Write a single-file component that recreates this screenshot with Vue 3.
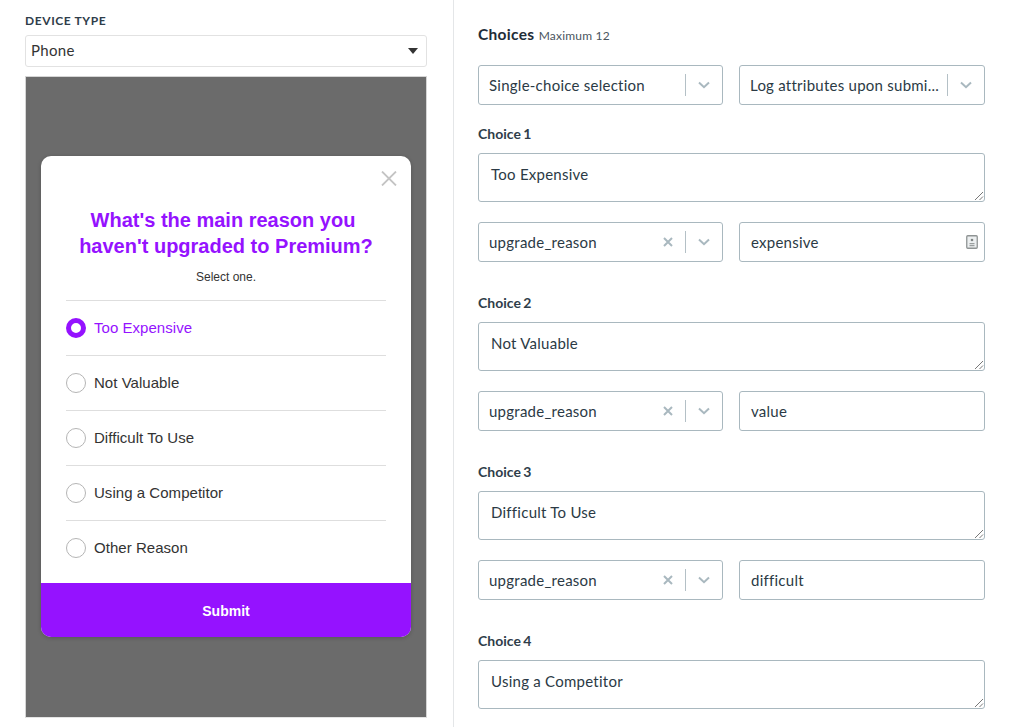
<script setup>
const options = [
  { label: "Too Expensive", selected: true },
  { label: "Not Valuable" },
  { label: "Difficult To Use" },
  { label: "Using a Competitor" },
  { label: "Other Reason" },
];

const choices = [
  { n: 1, text: "Too Expensive", value: "expensive", icon: true },
  { n: 2, text: "Not Valuable", value: "value" },
  { n: 3, text: "Difficult To Use", value: "difficult" },
];
</script>

<template>
  <div class="page">
    <section class="left">
      <div class="device-label">DEVICE TYPE</div>
      <div class="device-select">
        <span>Phone</span>
        <i class="caret"></i>
      </div>
      <div class="preview">
        <div class="modal">
          <div class="modal-close">
            <svg width="16" height="15" viewBox="0 0 16 15">
              <path d="M1 0.5L15 14.5M15 0.5L1 14.5" stroke="#c4c4c4" stroke-width="1.8" fill="none" />
            </svg>
          </div>
          <h2><span class="first-line">What's the main reason you</span><br />haven't upgraded to Premium?</h2>
          <p class="hint">Select one.</p>
          <ul>
            <li v-for="o in options" :key="o.label" :class="{ on: o.selected }">
              <span class="radio"></span>
              <span class="opt">{{ o.label }}</span>
            </li>
          </ul>
          <div class="submit">Submit</div>
        </div>
      </div>
    </section>

    <section class="right">
      <div class="heading"><b>Choices</b> <small>Maximum 12</small></div>
      <div class="row top-row">
        <div class="field pick">
          <span class="val">Single-choice selection</span>
          <span class="sep"></span>
          <svg class="chev" width="12" height="8" viewBox="0 0 12 8"><path d="M1 1.5L6 6.2L11 1.5" /></svg>
        </div>
        <div class="field pick">
          <span class="val">Log attributes upon submi...</span>
          <span class="sep"></span>
          <svg class="chev" width="12" height="8" viewBox="0 0 12 8"><path d="M1 1.5L6 6.2L11 1.5" /></svg>
        </div>
      </div>

      <div v-for="c in choices" :key="c.n" class="choice">
        <div class="choice-label">Choice {{ c.n }}</div>
        <div class="area">
          {{ c.text }}
          <svg class="grip" width="10" height="10" viewBox="0 0 10 10">
            <path d="M1 9L9 1M5.5 9L9 5.5" stroke="#555" stroke-width="0.8" fill="none" />
          </svg>
        </div>
        <div class="row">
          <div class="field pick">
            <span class="val">upgrade_reason</span>
            <svg class="clear" width="10" height="10" viewBox="0 0 10 10">
              <path d="M1 1L9 9M9 1L1 9" />
            </svg>
            <span class="sep"></span>
            <svg class="chev" width="12" height="8" viewBox="0 0 12 8"><path d="M1 1.5L6 6.2L11 1.5" /></svg>
          </div>
          <div class="field text">
            <span class="val">{{ c.value }}</span>
            <svg v-if="c.icon" class="contact" width="12" height="14" viewBox="0 0 12 14">
              <rect x="0.75" y="0.75" width="10.5" height="12.5" rx="1" fill="#eceff0" stroke="#8f9494" stroke-width="1.3" />
              <circle cx="6" cy="5" r="1.3" fill="#7f8484" />
              <path d="M3.5 8.6h5M3.5 10.6h5" stroke="#9a9f9f" stroke-width="1.2" />
            </svg>
          </div>
        </div>
      </div>

      <div class="choice">
        <div class="choice-label">Choice 4</div>
        <div class="area">
          Using a Competitor
          <svg class="grip" width="10" height="10" viewBox="0 0 10 10">
            <path d="M1 9L9 1M5.5 9L9 5.5" stroke="#555" stroke-width="0.8" fill="none" />
          </svg>
        </div>
      </div>
    </section>
  </div>
</template>

<style scoped>
.page {
  display: flex;
  height: 727px;
  overflow: hidden;
  background: #fff;
  font-family: Lato, "Open Sans", sans-serif;
  color: #2b3a45;
}
.left {
  box-sizing: border-box;
  width: 454px;
  flex: none;
  padding: 14px 26px 0 25px;
  border-right: 1px solid #e4e6e8;
}
.device-label {
  font-size: 12px;
  line-height: 14px;
  font-weight: 700;
  letter-spacing: 0.6px;
  color: #2f3d4a;
}
.device-select {
  box-sizing: border-box;
  height: 32px;
  margin-top: 7px;
  padding: 0 8px 2px 5px;
  display: flex;
  align-items: center;
  justify-content: space-between;
  border: 1px solid #e2e2e2;
  border-radius: 3px;
  font-size: 15px;
  letter-spacing: 0.3px;
  color: #333;
}
.caret {
  width: 0;
  height: 0;
  margin-top: 2px;
  border-left: 5.5px solid transparent;
  border-right: 5.5px solid transparent;
  border-top: 6px solid #333;
}
.preview {
  box-sizing: border-box;
  height: 642px;
  margin-top: 9px;
  padding: 79px 15px 0;
  background: #6b6b6b;
  border: 1px solid #d5d5d5;
  border-bottom-color: #e4e4e4;
}
.modal {
  height: 481px;
  background: #fff;
  border-radius: 10px;
  overflow: hidden;
  display: flex;
  flex-direction: column;
  font-family: "Liberation Sans", Arial, sans-serif;
  color: #333;
  box-shadow: 0 1px 4px rgba(0, 0, 0, 0.2);
}
.modal-close {
  height: 15px;
  padding: 15px 14px 0 0;
  display: flex;
  justify-content: flex-end;
}
h2 {
  margin: 21px 0 0;
  font-size: 20px;
  line-height: 26px;
  font-weight: 700;
  text-align: center;
  color: #9512ff;
}
.first-line {
  margin-right: 6px;
}
.hint {
  margin: 11px 0 0;
  font-size: 12px;
  line-height: 14px;
  text-align: center;
}
ul {
  list-style: none;
  margin: 16px 25px 0;
  padding: 0;
  flex: 1;
}
li {
  box-sizing: border-box;
  height: 55px;
  display: flex;
  align-items: center;
  gap: 8px;
  border-top: 1px solid #dedede;
  font-size: 15px;
  letter-spacing: 0.04px;
  color: #333;
}
li.on {
  color: #9512ff;
}
.opt {
  margin-top: -2px;
}
.radio {
  box-sizing: border-box;
  width: 20px;
  height: 20px;
  border: 1px solid #b5b5b5;
  border-radius: 50%;
}
li.on .radio {
  border: 5px solid #9512ff;
}
.submit {
  box-sizing: border-box;
  height: 54px;
  padding-top: 2px;
  display: flex;
  align-items: center;
  justify-content: center;
  background: #9512ff;
  color: #fff;
  font-size: 14px;
  font-weight: 700;
}
.right {
  flex: 1;
  min-width: 0;
  padding: 26px 24px 0 24px;
}
.heading {
  height: 16px;
  line-height: 16px;
  font-size: 15.5px;
  letter-spacing: 0.3px;
  color: #1f2d38;
}
.heading small {
  font-size: 12px;
  letter-spacing: 0.2px;
  color: #4a555e;
}
.row {
  display: grid;
  grid-template-columns: 245px 1fr;
  gap: 16px;
  margin-top: 20px;
}
.top-row {
  margin-top: 23px;
}
.field {
  box-sizing: border-box;
  min-width: 0;
  height: 40px;
  display: flex;
  align-items: center;
  border: 1px solid #a9b8bf;
  border-radius: 3px;
  font-size: 15px;
  letter-spacing: 0.25px;
  color: #2b3a45;
}
.pick {
  padding: 0 12px 0 10px;
}
.text {
  padding: 0 6px 0 11px;
}
.val {
  flex: 1;
  margin-top: -1px;
  white-space: nowrap;
}
.sep {
  width: 1px;
  height: 22px;
  margin: 0 12px 0 0;
  background: #b4c0c6;
}
.chev path {
  fill: none;
  stroke: #a9b8bf;
  stroke-width: 2;
}
.clear {
  margin-right: 12px;
}
.clear path {
  fill: none;
  stroke: #a9b8bf;
  stroke-width: 2;
}
.choice-label {
  height: 18px;
  line-height: 18px;
  font-size: 14px;
  font-weight: 700;
  word-spacing: -1px;
  color: #2f3d4a;
}
.choice {
  padding-bottom: 32px;
}
.top-row + .choice {
  margin-top: 20px;
}
.area {
  position: relative;
  box-sizing: border-box;
  height: 49px;
  margin-top: 10px;
  padding: 11px 12px 0;
  border: 1px solid #a9b8bf;
  border-radius: 3px;
  font-size: 15px;
  line-height: 18px;
  letter-spacing: 0.25px;
  color: #2b3a45;
}
.grip {
  position: absolute;
  right: 0;
  bottom: 0;
}
</style>
